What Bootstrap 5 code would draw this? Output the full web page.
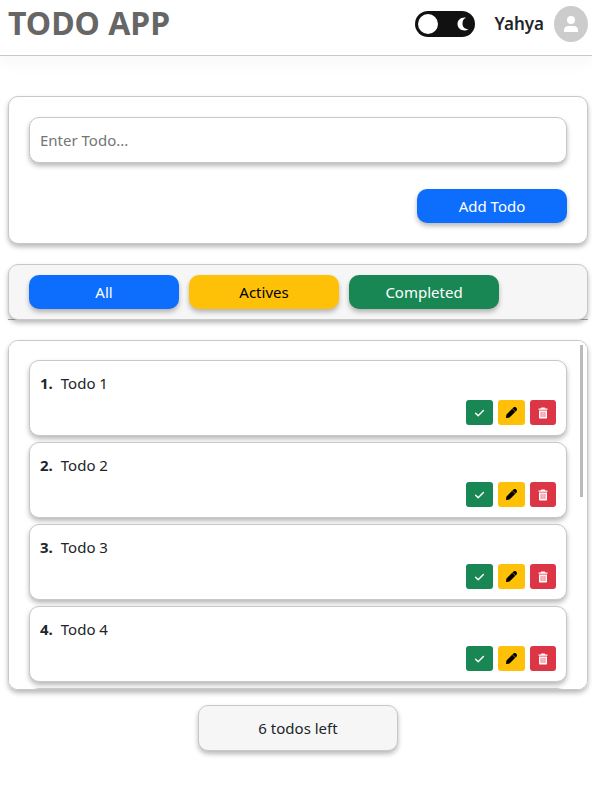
<!DOCTYPE html>
<html lang="en">
<head>
<meta charset="utf-8">
<meta name="viewport" content="width=device-width, initial-scale=1">
<title>Todo App</title>
<link href="https://cdn.jsdelivr.net/npm/bootstrap@5.3.0/dist/css/bootstrap.min.css" rel="stylesheet">
<style>
  :root { --line: #c8c8c8; --lift: 0 3px 5px rgba(0, 0, 0, .28); }
  body { font-family: "Segoe UI", "Noto Sans", sans-serif; font-size: 15px; line-height: 24px; background: #fff; }
  .topbar { height: 56px; padding: 0 4px 8px 8px; border-bottom: 1px solid var(--line); box-shadow: 0 8px 16px rgba(0, 0, 0, .03); }
  .brand-title { font-size: 32px; line-height: 40px; font-weight: 700; color: #666; padding-bottom: 2px; }
  .theme-switch { width: 60px; height: 26px; border-radius: 13px; background: #111; cursor: pointer; padding: 0 6px 0 3px; }
  .theme-switch .knob { width: 20px; height: 20px; background: #fff; }
  .user-name { font-size: 17px; font-weight: 600; margin: 0 10px 0 20px; }
  .avatar { width: 34px; height: 36px; background: #ccc; }
  .page-body { padding: 40px 4px 20px 8px; }
  .panel { border: 1px solid var(--line); border-radius: 10px; box-shadow: var(--lift); background: #fff; }
  .soft { background: #f6f6f6; }
  .entry { padding: 20px; }
  .entry-field { height: 46px; margin-bottom: 26px; padding: 0 10px; outline-color: #0d6efd; }
  .entry-field::placeholder { color: #757575; opacity: 1; }
  .wide-btn { width: 150px; height: 34px; padding: 0; border: 0; border-radius: 10px; font-size: 15px; box-shadow: var(--lift); }
  .filter-bar { margin: 20px 0; border-bottom: 1px solid #aaa; }
  .filters { margin-bottom: -1px; padding: 10px 20px; gap: 10px; }
  .list-scroll { height: 350px; padding: 19px 20px; overflow-y: auto; scrollbar-width: none; }
  .list-scroll::-webkit-scrollbar { display: none; }
  .thumb { position: absolute; top: 5px; right: 5px; width: 3px; height: 152px; background: #bbb; }
  .todo { height: 76px; margin-bottom: 6px; padding: 10px; }
  .todo-actions { gap: 5px; }
  .act { height: 25px; padding: 0 8px; border: 0; border-radius: 3px; }
  .counter { width: 200px; height: 46px; margin-top: 15px; }
</style>
</head>
<body>
<svg class="d-none" aria-hidden="true">
  <symbol id="i-check" viewBox="0 0 11 10"><path d="M1.6 5.2 4.2 7.700 9.400 2.400" fill="none" stroke="#fff" stroke-width="1.4" stroke-linecap="round" stroke-linejoin="round"/></symbol>
  <symbol id="i-pen" viewBox="0 0 512 512"><path d="M410.300 231l11.300-11.300-33.900-33.900-62.100-62.100L291.700 89.800l-11.300 11.300-22.600 22.600L58.600 322.900c-10.400 10.400-18 23.300-22.200 37.400L1 480.700c-2.500 8.400-.2 17.500 6.100 23.700s15.300 8.500 23.700 6.100l120.300-35.400c14.100-4.200 27-11.800 37.400-22.200L387.700 253.700 410.300 231zM362.700 18.700L348.300 33.200 325.700 55.800 314.300 67.100l33.900 33.900 62.100 62.100 33.900 33.900 11.300-11.300 22.600-22.600 14.500-14.500c25-25 25-65.500 0-90.500L453.300 18.700c-25-25-65.500-25-90.500 0z" stroke="#000" stroke-width="24"/></symbol>
  <symbol id="i-trash" viewBox="0 0 10 12"><path fill="#fff" fill-rule="evenodd" d="M3.300.6h3.400l.6.8h2.200v1.400h-9V1.400h2.200zM1 3.400h8v7q0 1.200-1.200 1.200H2.200Q1 11.600 1 10.400zM2.700 4.700v5.200h.7V4.700zM4.650 4.700v5.200h.7V4.700zM6.600 4.700v5.200h.7V4.700z"/></symbol>
</svg>

<header class="topbar d-flex align-items-center">
  <h1 class="brand-title m-0 me-auto">TODO APP</h1>
  <button type="button" class="theme-switch border-0 d-flex align-items-center justify-content-between" aria-label="Dark theme">
    <span class="knob rounded-circle"></span>
    <svg width="12" height="14" viewBox="0 0 12 14"><path d="M7.500.5C3.500.5.5 3.400.5 7s3 6.500 7 6.500c1.700 0 3-.6 4-1.500C7.800 12.300 5.500 10 5.500 6.500 5.500 4 6.400 2 8.900.800 8.500.6 8 .5 7.500.5z" fill="#fff"/></svg>
  </button>
  <span class="user-name">Yahya</span>
  <span class="avatar rounded-circle d-flex align-items-center justify-content-center">
    <svg width="14" height="16" viewBox="0 0 14 16"><circle cx="7" cy="4" r="4" fill="#fff"/><path d="M0 16v-1.500Q0 10 4.500 10h5Q14 10 14 14.500V16z" fill="#fff"/></svg>
  </span>
</header>

<main class="page-body">
  <form class="panel entry">
    <input type="text" class="panel entry-field w-100 d-block" placeholder="Enter Todo..." aria-label="Enter Todo">
    <div class="d-flex justify-content-end">
      <button type="button" class="btn btn-primary wide-btn">Add Todo</button>
    </div>
  </form>

  <div class="filter-bar">
    <div class="panel soft filters position-relative d-flex flex-wrap" role="group" aria-label="Filter todos">
      <button type="button" class="btn btn-primary wide-btn">All</button>
      <button type="button" class="btn btn-warning wide-btn">Actives</button>
      <button type="button" class="btn btn-success wide-btn">Completed</button>
    </div>
  </div>

  <section class="position-relative">
    <ul class="panel list-scroll list-unstyled m-0" id="todos"></ul>
    <div class="thumb"></div>
  </section>

  <div class="panel soft counter d-flex align-items-center justify-content-center mx-auto">6 todos left</div>
</main>

<script>
  document.getElementById('todos').innerHTML = [1, 2, 3, 4, 5, 6].map(n => `
    <li class="panel todo d-flex flex-column justify-content-between">
      <div class="d-flex gap-2"><strong>${n}.</strong><span>Todo ${n}</span></div>
      <div class="todo-actions d-flex justify-content-end">
        <button type="button" class="btn btn-success act d-flex align-items-center" aria-label="Complete todo ${n}"><svg width="11" height="10"><use href="#i-check"/></svg></button>
        <button type="button" class="btn btn-warning act d-flex align-items-center" aria-label="Edit todo ${n}"><svg width="11" height="11"><use href="#i-pen"/></svg></button>
        <button type="button" class="btn btn-danger act d-flex align-items-center" aria-label="Delete todo ${n}"><svg width="10" height="12"><use href="#i-trash"/></svg></button>
      </div>
    </li>`).join('');
</script>
<script src="https://cdn.jsdelivr.net/npm/bootstrap@5.3.0/dist/js/bootstrap.bundle.min.js"></script>
</body>
</html>
